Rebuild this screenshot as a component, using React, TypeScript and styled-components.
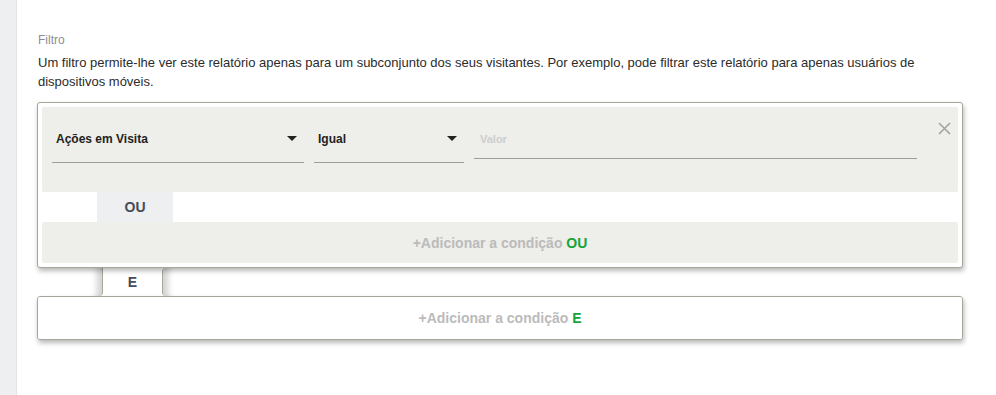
import styled, { createGlobalStyle } from 'styled-components';
import { FC } from 'react';

const GlobalStyle = createGlobalStyle`
	html, body {
		margin: 0;
		padding: 0;
		background: #ffffff;
	}
	body {
		font-family: 'Liberation Sans', Arial, sans-serif;
		color: #333333;
	}
`;

const GREEN = '#13a538';
const PANEL = '#eeeeea';
const BORDER = '#a6a69a';

type SelectProps = {
	label: string;
	width: number;
};

const Select: FC<SelectProps> = ({ label, width }) => (
	<SelectField style={{ width }}>
		<SelectLabel>{label}</SelectLabel>
		<Caret />
	</SelectField>
);

const CloseIcon = () => (
	<svg width="13" height="13" viewBox="0 0 13 13">
		<path d="M1 1 L12 12 M12 1 L1 12" stroke="#a3a3a3" strokeWidth="1.6" fill="none" />
	</svg>
);

const App = () => {
	return (
		<>
			<GlobalStyle />
			<Page>
				<Sidebar />
				<Content>
					<Heading>Filtro</Heading>
					<Description>
						Um filtro permite-lhe ver este relatório apenas para um subconjunto dos seus visitantes. Por
						exemplo, pode filtrar este relatório para apenas usuários de dispositivos móveis.
					</Description>

					<OrGroup>
						<ConditionPanel>
							<Select label="Ações em Visita" width={252} />
							<Select label="Igual" width={150} />
							<ValueField>
								<Placeholder>Valor</Placeholder>
							</ValueField>
							<CloseButton>
								<CloseIcon />
							</CloseButton>
						</ConditionPanel>
						<JoinRow>
							<OrTab>OU</OrTab>
						</JoinRow>
						<AddBar filled>
							+Adicionar a condição <Green>OU</Green>
						</AddBar>
					</OrGroup>

					<AndRow>
						<LeftStub />
						<AndTab>E</AndTab>
						<RightStub />
					</AndRow>

					<AndBox>
						<AddBar>
							+Adicionar a condição <Green>E</Green>
						</AddBar>
					</AndBox>
				</Content>
			</Page>
		</>
	);
};

const Page = styled.div`
	display: flex;
	min-height: 395px;
`;

const Sidebar = styled.div`
	width: 16px;
	flex-shrink: 0;
	background: #eeeff1;
	border-right: 1px solid #e3e4e6;
`;

const Content = styled.div`
	width: 926px;
	padding: 33px 0 0 20px;
`;

const Heading = styled.div`
	font-size: 12px;
	line-height: 14px;
	color: #8a8d96;
	padding-left: 1px;
`;

const Description = styled.p`
	margin: 6px 0 11px;
	padding-left: 1px;
	font-size: 13px;
	line-height: 19px;
	color: #2b2b2b;
`;

const Box = styled.div`
	border: 1px solid ${BORDER};
	border-radius: 3px;
	background: #ffffff;
	box-shadow: 1px 3px 5px rgba(0, 0, 0, 0.28);
`;

const OrGroup = styled(Box)`
	padding: 4px;
	position: relative;
	z-index: 1;
`;

const ConditionPanel = styled.div`
	display: flex;
	align-items: flex-start;
	gap: 10px;
	height: 85px;
	padding-left: 10px;
	background: ${PANEL};
	border-radius: 2px;
`;

const SelectField = styled.div`
	box-sizing: border-box;
	display: flex;
	align-items: center;
	justify-content: space-between;
	margin-top: 14px;
	height: 42px;
	padding: 0 7px 6px 4px;
	border-bottom: 1px solid #9d9d9d;
`;

const SelectLabel = styled.span`
	font-size: 12px;
	font-weight: bold;
	color: #222222;
`;

const Caret = styled.span`
	width: 0;
	height: 0;
	border-left: 5px solid transparent;
	border-right: 5px solid transparent;
	border-top: 5px solid #222222;
`;

const ValueField = styled.div`
	box-sizing: border-box;
	display: flex;
	align-items: center;
	width: 443px;
	margin-top: 14px;
	height: 38px;
	padding: 0 0 2px 6px;
	border-bottom: 1px solid #9d9d9d;
`;

const Placeholder = styled.span`
	font-size: 11px;
	font-weight: bold;
	color: #cdcdcd;
`;

const CloseButton = styled.div`
	display: flex;
	margin: 15px 0 0 11px;
	cursor: pointer;
`;

const JoinRow = styled.div`
	display: flex;
	height: 30px;
	padding-left: 55px;
`;

const OrTab = styled.div`
	width: 76px;
	display: flex;
	align-items: center;
	justify-content: center;
	background: #eeeff1;
	font-size: 14px;
	font-weight: bold;
	color: #474c57;
`;

const AddBar = styled.div<{ filled?: boolean }>`
	height: ${(props) => (props.filled ? '41px' : '42px')};
	display: flex;
	align-items: center;
	justify-content: center;
	border-radius: 2px;
	background: ${(props) => (props.filled ? PANEL : '#ffffff')};
	font-size: 14px;
	font-weight: bold;
	color: #bbbbbb;
	white-space: pre;
`;

const Green = styled.span`
	color: ${GREEN};
`;

const AndRow = styled.div`
	display: flex;
	height: 28px;
`;

const StubMixin = `
	box-sizing: border-box;
	border: 1px solid ${BORDER};
	border-top: none;
	border-bottom: none;
`;

const LeftStub = styled.div`
	${StubMixin};
	width: 66px;
	border-left: none;
	border-bottom-right-radius: 4px;
	box-shadow: inset -11px 0 6px -6px rgba(0, 0, 0, 0.18);
`;

const AndTab = styled.div`
	width: 59px;
	display: flex;
	align-items: center;
	justify-content: center;
	font-size: 14px;
	font-weight: bold;
	color: #474c57;
`;

const RightStub = styled.div`
	${StubMixin};
	flex: 1;
	border-right: none;
	border-top-left-radius: 4px;
	border-bottom-left-radius: 4px;
	box-shadow: inset 11px 0 6px -6px rgba(0, 0, 0, 0.18);
`;

const AndBox = styled(Box)``;

export default App;
